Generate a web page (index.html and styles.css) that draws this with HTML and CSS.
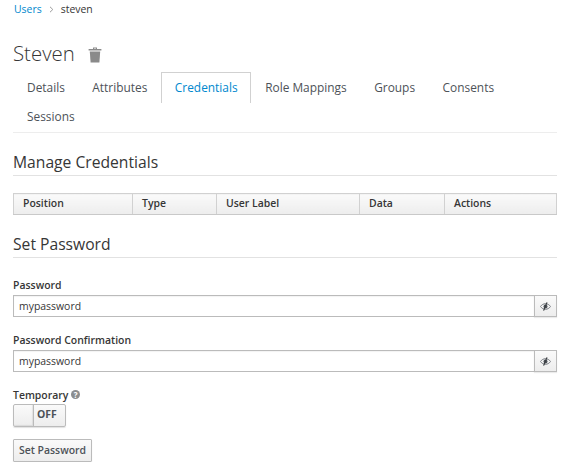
FILE: index.html
```html
<!DOCTYPE html>
<html>

<head>
    <meta charset="utf-8" />
    <title>Steven</title>
    <link rel="stylesheet" href="styles.css">
</head>

<body>
    <ol class="breadcrumb">
        <li><a href="#">Users</a></li>
        <li class="crumb_sep">
            <svg width="5" height="7" viewBox="0 0 5 7"><path d="M1 .8 3.800 3.500 1 6.200" fill="none" stroke="#9c9c9c" stroke-width="1"/></svg>
        </li>
        <li>steven</li>
    </ol>

    <h1 class="page_title">
        Steven
        <svg class="trash" width="14" height="16" viewBox="0 0 14 16">
            <path d="M5 2V.6h4V2h4.400v1.600H.6V2zM6 1.400V2h2v-.6z" fill="#8a8a8a" fill-rule="evenodd"/>
            <path d="M1.800 4.600h10.400L11.400 15.600H2.600z" fill="#8a8a8a"/>
        </svg>
    </h1>

    <ul class="tabs">
        <li><a href="#">Details</a></li>
        <li><a href="#">Attributes</a></li>
        <li class="active"><a href="#">Credentials</a></li>
        <li><a href="#">Role Mappings</a></li>
        <li><a href="#">Groups</a></li>
        <li><a href="#">Consents</a></li>
        <li><a href="#">Sessions</a></li>
    </ul>

    <h2 class="section_title">Manage Credentials</h2>
    <table class="cred_table">
        <thead>
            <tr>
                <th class="col_position">Position</th>
                <th class="col_type">Type</th>
                <th class="col_label">User Label</th>
                <th class="col_data">Data</th>
                <th>Actions</th>
            </tr>
        </thead>
    </table>

    <h2 class="section_title">Set Password</h2>
    <form class="pw_form">
        <div class="field">
            <label>Password</label>
            <div class="input_group">
                <input type="text" value="mypassword">
                <button type="button" class="eye_btn">
                    <svg width="11" height="9" viewBox="0 0 11 9">
                        <path d="M.4 4.500C1.800 2.700 3.500 1.700 5.500 1.700S9.200 2.700 10.600 4.500C9.200 6.300 7.500 7.300 5.500 7.300S1.800 6.300.4 4.500z" fill="none" stroke="#6a6f76" stroke-width=".9"/>
                        <circle cx="5.500" cy="4.500" r="2" fill="#4d5258"/>
                        <path d="M7 .4 3.600 8.600" stroke="#363a3e" stroke-width="1.100"/>
                    </svg>
                </button>
            </div>
        </div>
        <div class="field">
            <label>Password Confirmation</label>
            <div class="input_group">
                <input type="text" value="mypassword">
                <button type="button" class="eye_btn">
                    <svg width="11" height="9" viewBox="0 0 11 9">
                        <path d="M.4 4.500C1.800 2.700 3.500 1.700 5.500 1.700S9.200 2.700 10.600 4.500C9.200 6.300 7.500 7.300 5.500 7.300S1.800 6.300.4 4.500z" fill="none" stroke="#6a6f76" stroke-width=".9"/>
                        <circle cx="5.500" cy="4.500" r="2" fill="#4d5258"/>
                        <path d="M7 .4 3.600 8.600" stroke="#363a3e" stroke-width="1.100"/>
                    </svg>
                </button>
            </div>
        </div>
        <div class="field toggle_field">
            <label>Temporary <span class="help">?</span></label>
            <div class="toggle">
                <span class="toggle_handle"></span>
                <span class="toggle_text">OFF</span>
            </div>
        </div>
        <button type="button" class="btn">Set Password</button>
    </form>
</body>

</html>
```

FILE: styles.css
```css
* {
    box-sizing: border-box;
}

body {
    margin: 0;
    padding: 0 17px 0 13px;
    font-family: "Open Sans", "Liberation Sans", sans-serif;
    font-size: 10.44px;
    color: #363636;
    background: #fff;
}

a {
    text-decoration: none;
}

.breadcrumb {
    display: flex;
    align-items: center;
    height: 17px;
    margin: 0;
    padding: 1px 0 0 1px;
    list-style: none;
    line-height: 17px;
}

.breadcrumb a {
    color: #0088ce;
}

.crumb_sep {
    display: flex;
    margin: 0 7px 0 7px;
}

.page_title {
    display: flex;
    align-items: center;
    gap: 13px;
    height: 33px;
    margin: 20px 0 0;
    font-size: 20.4px;
    font-weight: 300;
    line-height: 33px;
}

.trash {
    margin-top: 3px;
}

.tabs {
    display: flex;
    flex-wrap: wrap;
    align-content: flex-start;
    height: 61px;
    margin: 2px 0 0;
    padding: 0;
    list-style: none;
    border-bottom: 1px solid #ededed;
}

.tabs li {
    height: 29px;
}

.tabs a {
    display: block;
    height: 29px;
    padding: 0 12.5px 0 13px;
    border: 1px solid transparent;
    border-bottom: 0;
    font-size: 11.9px;
    line-height: 29px;
    color: #4d5258;
}

.tabs .active a {
    height: 31px;
    border-color: #d1d1d1;
    color: #0088ce;
    background: #fff;
}

.section_title {
    height: 25px;
    margin: 18px 0 0;
    border-bottom: 1px solid #e2e2e2;
    font-size: 15.66px;
    font-weight: 400;
    line-height: 22px;
}

.cred_table {
    width: 100%;
    margin-top: 17px;
    border-collapse: collapse;
    table-layout: fixed;
}

.cred_table th {
    height: 21px;
    padding: 0 9px 2px;
    border: 1px solid #d1d1d1;
    border-bottom-color: #c9c9c9;
    background: linear-gradient(#fafafa, #ededed);
    font-size: 10.44px;
    font-weight: 600;
    text-align: left;
}

.col_position {
    width: 119px;
}

.col_type {
    width: 84px;
}

.col_label {
    width: 143px;
}

.col_data {
    width: 85px;
}

.pw_form {
    padding-top: 19px;
}

.field {
    margin-bottom: 15px;
}

.field label {
    display: block;
    height: 17px;
    margin-bottom: 1px;
    font-size: 10.44px;
    font-weight: 600;
    line-height: 17px;
}

.toggle_field {
    margin-bottom: 12px;
}

.toggle_field label {
    margin-bottom: 0;
}

.input_group {
    display: flex;
    height: 22px;
}

.input_group input {
    flex: 1;
    min-width: 0;
    padding: 0 5px;
    border: 1px solid #bbb;
    border-right: 0;
    font: 10.44px "Open Sans", "Liberation Sans", sans-serif;
    color: #363636;
    box-shadow: inset 0 1px 1px rgba(3, 3, 3, 0.05);
}

.eye_btn {
    display: flex;
    align-items: center;
    justify-content: center;
    width: 23px;
    padding: 0;
    border: 1px solid #bbb;
    background: linear-gradient(#fafafa, #ededed);
    box-shadow: 0 1px 1px rgba(3, 3, 3, 0.08);
}

.help {
    display: inline-block;
    width: 9px;
    height: 9px;
    border-radius: 50%;
    background: #8b8d8f;
    color: #fff;
    font-size: 8px;
    font-weight: 700;
    line-height: 9px;
    text-align: center;
    vertical-align: 1px;
}

.toggle {
    display: flex;
    width: 53px;
    height: 23px;
    border: 1px solid #bbb;
    border-radius: 2px;
    background: linear-gradient(#fafafa, #ededed);
    box-shadow: 0 1px 1px rgba(3, 3, 3, 0.12);
}

.toggle_handle {
    width: 20px;
    border-right: 1px solid #bbb;
    border-radius: 2px 0 0 2px;
    box-shadow: inset -1px -1px 1px rgba(3, 3, 3, 0.08);
}

.toggle_text {
    padding-left: 3px;
    font-size: 10.44px;
    font-weight: 700;
    line-height: 19px;
    color: #4d5258;
}

.btn {
    display: block;
    width: 79px;
    height: 23px;
    padding: 0 0 2px;
    border: 1px solid #bbb;
    border-radius: 1px;
    background: linear-gradient(#fafafa, #ededed);
    box-shadow: 0 1px 1px rgba(3, 3, 3, 0.12);
    font: 600 10.44px "Open Sans", "Liberation Sans", sans-serif;
    color: #4d5258;
}
```
